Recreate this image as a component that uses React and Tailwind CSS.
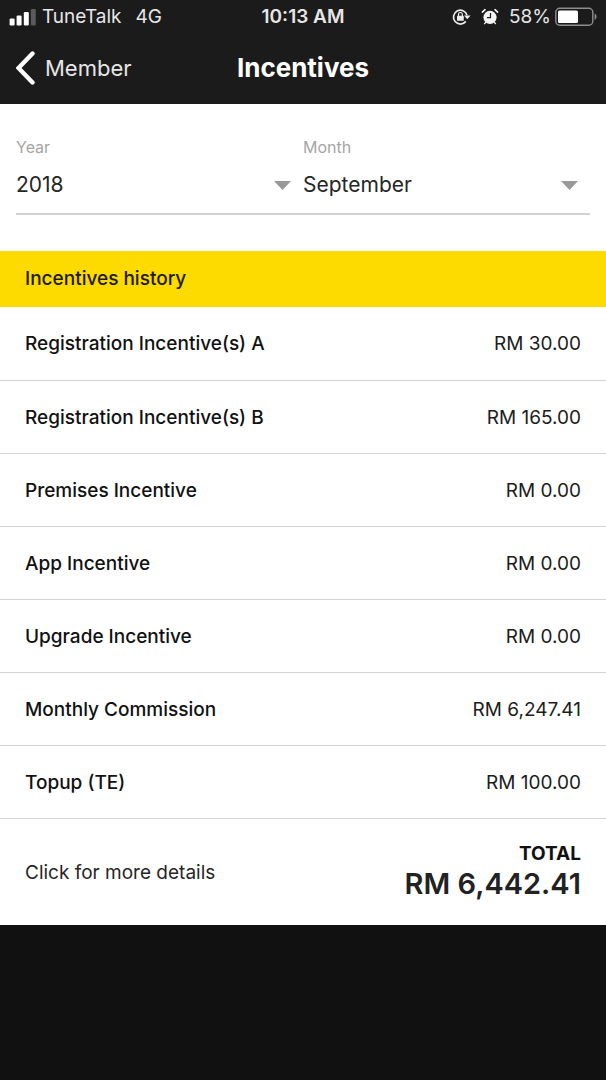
const incentives = [
  { label: 'Registration Incentive(s) A', amount: 'RM 30.00' },
  { label: 'Registration Incentive(s) B', amount: 'RM 165.00' },
  { label: 'Premises Incentive', amount: 'RM 0.00' },
  { label: 'App Incentive', amount: 'RM 0.00' },
  { label: 'Upgrade Incentive', amount: 'RM 0.00' },
  { label: 'Monthly Commission', amount: 'RM 6,247.41' },
  { label: 'Topup (TE)', amount: 'RM 100.00' },
];

function SignalIcon() {
  return (
    <svg width="28" height="18" viewBox="0 0 28 18" aria-hidden="true">
      <rect x="1.6" y="10.4" width="5" height="7" rx="1.2" fill="#fff" />
      <rect x="8.6" y="7.6" width="5" height="9.8" rx="1.2" fill="#fff" />
      <rect x="15.8" y="4" width="5" height="13.4" rx="1.2" fill="#fff" />
      <rect x="22.8" y="1" width="5" height="16.4" rx="1.2" fill="#5a5a5a" />
    </svg>
  );
}

function RotationLockIcon() {
  return (
    <svg width="19" height="18" viewBox="0 0 19 18" fill="none" aria-hidden="true">
      <path d="M15 7.2A6.9 6.9 0 1 0 13.8 13.4" stroke="#ececec" strokeWidth="1.7" />
      <path d="M12 7.4h6.6L15.3 11.2z" fill="#ececec" />
      <rect x="5" y="7.8" width="6.8" height="5" rx="0.6" fill="#ececec" />
      <path d="M6.5 8V6.4a1.9 1.9 0 0 1 3.8 0V8" stroke="#ececec" strokeWidth="1.2" />
    </svg>
  );
}

function AlarmIcon() {
  return (
    <svg width="18" height="18" viewBox="0 0 18 18" fill="none" aria-hidden="true">
      <circle cx="9" cy="9.3" r="6.6" fill="#f4f4f4" />
      <path d="M1.4 4.2 4 1.7M16.6 4.2 14 1.7" stroke="#f4f4f4" strokeWidth="1.6" strokeLinecap="round" />
      <path d="M4.6 14.4 3.6 15.6M13.4 14.4l1 1.2" stroke="#f4f4f4" strokeWidth="1.4" strokeLinecap="round" />
      <path d="M9.5 5v4.7H6" stroke="#1b1b1b" strokeWidth="1.2" />
    </svg>
  );
}

function BatteryIcon() {
  return (
    <svg width="43" height="20" viewBox="0 0 43 20" fill="none" aria-hidden="true">
      <rect x="0.8" y="1.3" width="37" height="17" rx="4" stroke="#8d8d8d" strokeWidth="1.4" />
      <rect x="3" y="3.5" width="20" height="12.6" rx="1.6" fill="#fff" />
      <path d="M39.6 6.6c2.6 1.3 2.6 5 0 6.4z" fill="#8d8d8d" />
    </svg>
  );
}

function Picker({ id, label, options, value }) {
  return (
    <div className="flex flex-1 flex-col">
      <label htmlFor={id} className="text-base leading-6 text-[#a5a5a5]">
        {label}
      </label>
      <div className="mt-3 grid items-center border-b-2 border-[#d2d2d2] pb-3.5">
        <select
          id={id}
          defaultValue={value}
          className="col-start-1 row-start-1 w-full appearance-none bg-transparent text-[21px] leading-7 text-[#262626] outline-none"
        >
          {options.map((option) => (
            <option key={option}>{option}</option>
          ))}
        </select>
        <svg
          className="pointer-events-none col-start-1 row-start-1 mr-3 justify-self-end"
          width="17"
          height="9"
          viewBox="0 0 17 9"
          aria-hidden="true"
        >
          <path d="M0 0h17L8.5 9z" fill="#999" />
        </svg>
      </div>
    </div>
  );
}

export default function App() {
  return (
    <div className="min-h-screen bg-[#111111] font-['Inter',sans-serif]">
      <header className="bg-[#1b1b1b] text-[#e6e6e6]">
        <div className="grid h-8 grid-cols-[1fr_auto_1fr] items-center px-2 pt-0.5 text-[19px] leading-7">
          <div className="flex items-center gap-1.5 whitespace-nowrap">
            <SignalIcon />
            <span>TuneTalk</span>
            <span className="ml-2">4G</span>
          </div>
          <time className="font-semibold">10:13 AM</time>
          <div className="flex items-center justify-end gap-2.5">
            <RotationLockIcon />
            <AlarmIcon />
            <div className="flex items-center gap-1">
              <span>58%</span>
              <BatteryIcon />
            </div>
          </div>
        </div>
        <nav className="grid h-18 grid-cols-[1fr_auto_1fr] items-center px-4">
          <button type="button" className="flex items-center gap-2.5 text-[22px] leading-7">
            <svg width="19" height="34" viewBox="0 0 19 34" fill="none" aria-hidden="true">
              <path d="M16.5 2.5 2.5 17l14 14.5" stroke="#fff" strokeWidth="4.4" strokeLinecap="round" />
            </svg>
            Member
          </button>
          <h1 className="text-[26px] leading-8 font-bold text-white">Incentives</h1>
        </nav>
      </header>

      <main className="bg-white">
        <form className="flex px-4 pt-[31px] pb-9">
          <Picker id="year" label="Year" value="2018" options={['2017', '2018']} />
          <Picker id="month" label="Month" value="September" options={['August', 'September', 'October']} />
        </form>

        <section>
          <h2 className="bg-[#fddb00] px-[25px] py-3.5 text-[19px] leading-7 font-medium text-[#1f1a05]">
            Incentives history
          </h2>
          <table className="w-full text-[19px] leading-7">
            <tbody>
              {incentives.map(({ label, amount }) => (
                <tr key={label} className="h-[73px] border-b border-[#d2d2d2]">
                  <th scope="row" className="pt-0.5 pl-[25px] text-left font-medium text-[#111]">{label}</th>
                  <td className="pt-0.5 pr-[25px] text-right text-[#1c1c1c]">{amount}</td>
                </tr>
              ))}
            </tbody>
            <tfoot>
              <tr className="h-[107px]">
                <td className="pt-0.5 pl-[25px] text-[#262626]">
                  <a href="#details">Click for more details</a>
                </td>
                <td className="pr-[25px] pb-1 text-right">
                  <div className="leading-7 font-bold text-[#111]">TOTAL</div>
                  <div className="text-[29px] leading-8 font-semibold text-[#222]">RM 6,442.41</div>
                </td>
              </tr>
            </tfoot>
          </table>
        </section>
      </main>
    </div>
  );
}
